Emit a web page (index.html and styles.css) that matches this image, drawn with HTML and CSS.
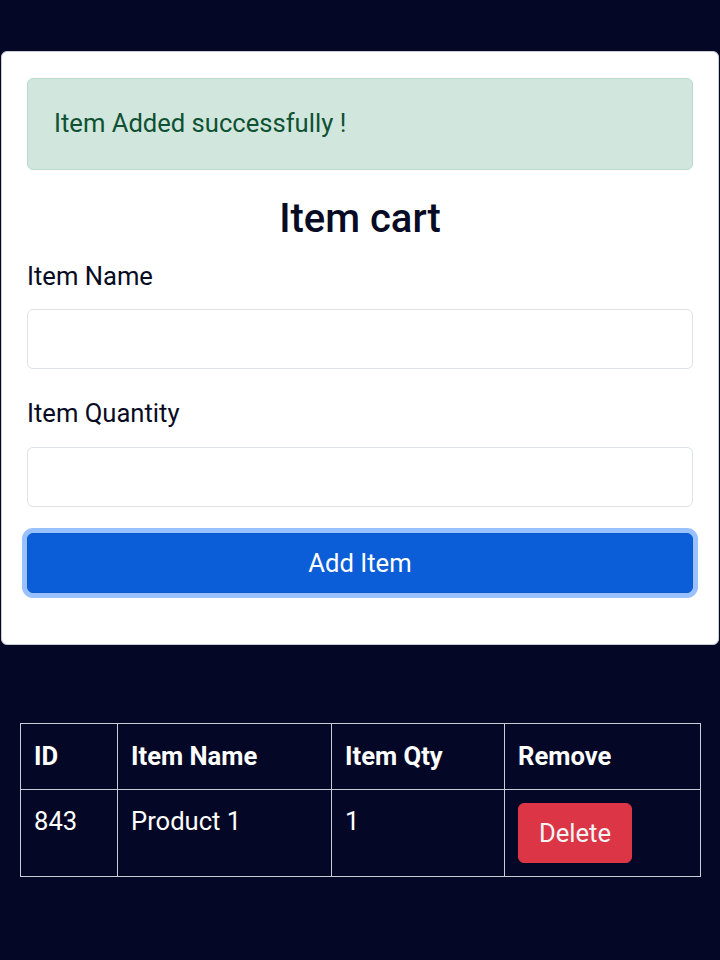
FILE: index.html
```html
<!DOCTYPE html>
<html lang="en">
<head>
<meta charset="utf-8">
<title>Item cart</title>
<link rel="stylesheet" href="styles.css">
</head>
<body>
<div class="card">
  <div class="alert">Item Added successfully !</div>
  <h3 class="title">Item cart</h3>
  <label class="label" for="name">Item Name</label>
  <input class="input" id="name" type="text">
  <label class="label label-qty" for="qty">Item Quantity</label>
  <input class="input" id="qty" type="text">
  <button class="btn-add" type="button">Add Item</button>
</div>
<table class="items">
  <colgroup>
    <col class="c-id"><col class="c-name"><col class="c-qty"><col class="c-rm">
  </colgroup>
  <thead>
    <tr><th>ID</th><th>Item Name</th><th>Item Qty</th><th>Remove</th></tr>
  </thead>
  <tbody>
    <tr><td>843</td><td>Product 1</td><td>1</td><td><button class="btn-del" type="button">Delete</button></td></tr>
  </tbody>
</table>
</body>
</html>
```

FILE: styles.css
```css
html, body {
  margin: 0;
  padding: 0;
}
body {
  background: #040826;
  font-family: Roboto, "Liberation Sans", sans-serif;
  font-size: 25.6px;
  line-height: 40px;
  color: #070b24;
  min-height: 960px;
  padding-top: 51px;
  box-sizing: border-box;
}
.card {
  margin: 0 1px;
  background: #fff;
  border: 1px solid #c9ccd3;
  border-radius: 6px;
  padding: 26px 25px 51px;
  display: flex;
  flex-direction: column;
}
.alert {
  background: #d1e7dd;
  border: 1px solid #badbcc;
  color: #0f5132;
  border-radius: 6px;
  padding: 24px 26px 26px;
  margin-bottom: 25px;
}
.title {
  margin: 0 0 13px;
  text-align: center;
  font-size: 40px;
  line-height: 48px;
  font-weight: 500;
  color: #070b24;
}
.label {
  display: block;
  margin-bottom: 13px;
}
.label-qty {
  margin-top: 24px;
  margin-bottom: 14px;
}
.input {
  display: block;
  box-sizing: border-box;
  width: 100%;
  height: 60px;
  border: 1px solid #dee2e6;
  border-radius: 6px;
  background: #fff;
  margin: 0;
  font: inherit;
  padding: 0 20px;
}
.btn-add {
  margin-top: 26px;
  height: 60px;
  width: 100%;
  background: #0b5ed7;
  border: 1px solid #0a58ca;
  border-radius: 6px;
  color: #fff;
  font: inherit;
  box-shadow: 0 0 0 5px #98c1fe;
  padding: 0;
}
.items {
  margin: 78px 20px 0;
  width: 680px;
  border-collapse: collapse;
  table-layout: fixed;
  color: #fff;
}
.c-id { width: 97px; }
.c-name { width: 214px; }
.c-qty { width: 173px; }
.c-rm { width: 196px; }
.items th, .items td {
  border: 1px solid #c9ccd6;
  padding: 12px 13px 13px;
  text-align: left;
  vertical-align: top;
  line-height: 40px;
}
.items td {
  padding-top: 11px;
  padding-bottom: 13px;
}
.items th {
  font-weight: 700;
}
.btn-del {
  display: block;
  height: 60px;
  width: 114px;
  margin-top: 2px;
  background: #dc3545;
  border: 1px solid #dc3545;
  border-radius: 6px;
  color: #f4f4f6;
  font: inherit;
  padding: 0;
}
```
